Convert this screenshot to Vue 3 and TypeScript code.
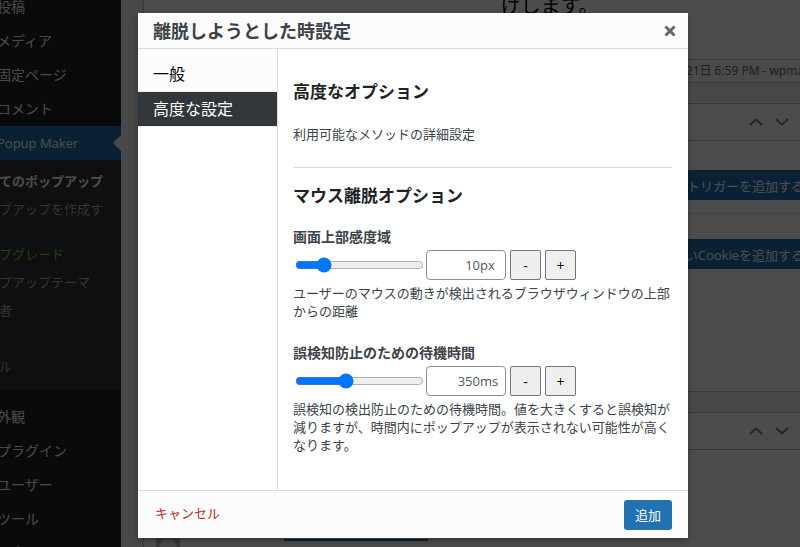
<script setup lang="ts">
import { ref } from 'vue'

interface Slider {
  id: string
  label: string
  help: string
  unit: string
  min: number
  max: number
  step: number
  value: number
}

const sliders = ref<Slider[]>([
  {
    id: 'top-sensitivity',
    label: '画面上部感度域',
    help: 'ユーザーのマウスの動きが検出されるブラウザウィンドウの上部からの距離',
    unit: 'px',
    min: 1,
    max: 50,
    step: 1,
    value: 10,
  },
  {
    id: 'delay-sensitivity',
    label: '誤検知防止のための待機時間',
    help: '誤検知の検出防止のための待機時間。値を大きくすると誤検知が減りますが、時間内にポップアップが表示されない可能性が高くなります。',
    unit: 'ms',
    min: 100,
    max: 750,
    step: 50,
    value: 350,
  },
])

const tabs = ['一般', '高度な設定']
const activeTab = ref('高度な設定')

const menuTop = ['投稿', 'メディア', '固定ページ', 'コメント']
const menuBottom = ['外観', 'プラグイン', 'ユーザー', 'ツール', '設定']

function nudge(s: Slider, direction: number) {
  s.value = Math.min(s.max, Math.max(s.min, s.value + direction * s.step))
}
</script>

<template>
  <div class="screen">
    <nav class="menu">
      <a v-for="m in menuTop" :key="m" href="#" class="item">{{ m }}</a>
      <a href="#" class="item current">Popup Maker</a>
      <div class="submenu">
        <a href="#" class="active">てのポップアップ</a>
        <a href="#" class="two-line">プアップを作成す</a>
        <a href="#" class="upgrade">プグレード</a>
        <a href="#">プアップテーマ</a>
        <a href="#" class="spaced">者</a>
        <a href="#">ル</a>
      </div>
      <a v-for="m in menuBottom" :key="m" href="#" class="item">{{ m }}</a>
    </nav>

    <main class="page">
      <section class="editor">
        <p class="editor-text">けします。</p>
        <p class="status">21日 6:59 PM - wpma</p>
      </section>
      <section class="box">
        <header class="box-head">
          <svg viewBox="0 0 14 8"><path d="M1 7 7 1.500 13 7" /></svg>
          <svg viewBox="0 0 14 8"><path d="M1 1 7 6.500 13 1" /></svg>
        </header>
        <div class="box-row"><button type="button" class="wide">トリガーを追加する</button></div>
        <div class="box-row last"><button type="button" class="wide">いCookieを追加する</button></div>
      </section>
      <section class="box tail">
        <header class="box-head">
          <svg viewBox="0 0 14 8"><path d="M1 7 7 1.500 13 7" /></svg>
          <svg viewBox="0 0 14 8"><path d="M1 1 7 6.500 13 1" /></svg>
        </header>
        <div class="author">
          <svg class="avatar" viewBox="0 0 24 24">
            <rect width="24" height="24" fill="#c0c0c0" />
            <circle cx="12" cy="10" r="9" fill="#f0f0f0" />
          </svg>
          <span class="field"></span>
        </div>
      </section>
    </main>

    <div class="overlay">
      <form class="modal" role="dialog" aria-labelledby="modal-title" @submit.prevent>
        <header class="modal-head">
          <h2 id="modal-title">離脱しようとした時設定</h2>
          <button type="button" class="close" aria-label="閉じる">
            <svg viewBox="0 0 12 12"><path d="M1.500 1.500 10.500 10.500M10.500 1.500 1.500 10.500" /></svg>
          </button>
        </header>

        <div class="modal-body">
          <div class="tabs">
            <button
              v-for="t in tabs"
              :key="t"
              type="button"
              :class="{ on: t === activeTab }"
              @click="activeTab = t"
            >{{ t }}</button>
          </div>

          <div class="content">
            <div class="intro">
              <h3>高度なオプション</h3>
              <p>利用可能なメソッドの詳細設定</p>
            </div>
            <h3>マウス離脱オプション</h3>
            <div v-for="s in sliders" :key="s.id" class="setting">
              <label :for="s.id">{{ s.label }}</label>
              <div class="controls">
                <input
                  v-model.number="s.value"
                  type="range"
                  :min="s.min"
                  :max="s.max"
                  :aria-label="s.label"
                />
                <span class="number">
                  <input :id="s.id" v-model.number="s.value" type="number" :min="s.min" :max="s.max" />
                  <span class="unit">{{ s.unit }}</span>
                </span>
                <button type="button" @click="nudge(s, -1)">-</button>
                <button type="button" @click="nudge(s, 1)">+</button>
              </div>
              <p>{{ s.help }}</p>
            </div>
          </div>
        </div>

        <footer class="modal-foot">
          <a href="#" class="cancel">キャンセル</a>
          <button type="submit" class="submit">追加</button>
        </footer>
      </form>
    </div>
  </div>
</template>

<style>
body {
  margin: 0;
  overflow: hidden;
  background: #f0f0f1;
}
</style>

<style scoped>
.screen {
  position: relative;
  display: flex;
  height: 100vh;
  overflow: hidden;
  font-family: 'Open Sans', 'Noto Sans CJK JP', sans-serif;
  font-size: 13px;
  line-height: 18px;
  color: #3c434a;
}
.screen * {
  box-sizing: border-box;
}
h2,
h3,
p {
  margin: 0;
}
a {
  text-decoration: none;
}
button,
input {
  margin: 0;
  font-family: inherit;
}

/* Admin menu */
.menu {
  flex: none;
  width: 124px;
  margin: -10px 0 0 -3px;
  background: #1d2327;
  white-space: nowrap;
}
.item {
  display: block;
  height: 34px;
  font-size: 14px;
  line-height: 34px;
  color: #f0f0f1;
}
.item.current {
  position: relative;
  background: #2271b1;
  color: #fff;
  font-size: 13px;
}
.item.current::after {
  content: '';
  position: absolute;
  top: 9px;
  right: 0;
  border: 8px solid transparent;
  border-left: 0;
  border-right-color: #f0f0f1;
}
.submenu {
  display: flex;
  flex-direction: column;
  margin-bottom: 11px;
  padding: 7px 0 9px 2px;
  background: #2c3338;
}
.submenu a {
  padding: 5px 0;
  color: #a7aaad;
}
.submenu .active {
  font-weight: 600;
  color: #fff;
}
.submenu .two-line {
  padding-bottom: 22px;
}
.submenu .upgrade {
  color: #8fbf30;
}
.submenu .spaced {
  padding-bottom: 33px;
}

/* Page behind the dialog */
.page {
  flex: 1;
  min-width: 0;
  display: flex;
  flex-direction: column;
  gap: 20px;
  margin-right: -5px;
  padding-left: 22px;
}
.editor,
.box {
  border: 1px solid #c3c4c7;
  background: #fff;
}
.editor {
  border-top: 0;
}
.editor-text {
  height: 59px;
  padding-left: 54%;
  font-size: 20px;
  line-height: 12px;
  color: #000;
}
.status {
  border-top: 1px solid #c3c4c7;
  background: #f6f7f7;
  font-size: 12px;
  line-height: 22px;
  text-align: right;
  color: #646970;
}
.box-head {
  display: flex;
  align-items: center;
  justify-content: flex-end;
  gap: 12px;
  height: 37px;
  padding-right: 15px;
  border-bottom: 1px solid #c3c4c7;
}
.box-head svg {
  width: 14px;
  height: 8px;
  fill: none;
  stroke: #787c82;
  stroke-width: 2;
}
.box-row {
  display: flex;
  justify-content: flex-end;
  padding: 29px 0 13px;
  border-bottom: 1px solid #e4e4e4;
}
.box-row.last {
  padding: 25px 0 122px;
  border-bottom: 0;
}
.wide {
  width: 180px;
  height: 30px;
  padding: 0;
  border: 0;
  background: #2271b1;
  color: #fff;
  font-size: 13px;
  text-align: right;
}
.tail {
  flex: 1;
}
.author {
  display: flex;
  align-items: flex-end;
  gap: 104px;
  padding: 88px 0 0 12px;
}
.avatar {
  width: 24px;
  height: 24px;
}
.field {
  width: 144px;
  height: 2px;
  margin-bottom: 21px;
  background: #2271b1;
}

/* Dialog */
.overlay {
  position: absolute;
  inset: 0;
  display: flex;
  padding: 13px 112px 9px 138px;
  background: rgba(0, 0, 0, 0.7);
}
.modal {
  flex: 1;
  min-width: 0;
  display: flex;
  flex-direction: column;
  background: #fff;
  box-shadow: 0 3px 6px rgba(0, 0, 0, 0.3);
}
.modal-head {
  display: flex;
  align-items: center;
  justify-content: space-between;
  height: 36px;
  padding: 0 12px 0 15px;
  border-bottom: 1px solid #ddd;
  background: #fcfcfc;
}
.modal-head h2 {
  font-size: 18px;
  font-weight: 600;
  line-height: 24px;
}
.close {
  display: flex;
  padding: 0;
  border: 0;
  background: none;
}
.close svg {
  width: 12px;
  height: 12px;
  fill: none;
  stroke: #666;
  stroke-width: 3;
}
.modal-body {
  flex: 1;
  display: flex;
}
.tabs {
  flex: none;
  width: 140px;
  padding-top: 8px;
  border-right: 1px solid #ddd;
}
.tabs button {
  display: block;
  width: 100%;
  height: 35px;
  padding: 0 15px;
  border: 0;
  border-bottom: 1px solid #eee;
  background: #fcfcfc;
  color: #000;
  font-size: 16px;
  line-height: 34px;
  text-align: left;
}
.tabs .on {
  background: #32373c;
  color: #fff;
}
.content {
  flex: 1;
  min-width: 0;
  padding: 31px 16px 16px 15px;
}
.content h3 {
  font-size: 17px;
  font-weight: 600;
  line-height: 24px;
  color: #1d2327;
}
.intro {
  margin-bottom: 16px;
  padding-bottom: 24px;
  border-bottom: 1px solid #ddd;
}
.intro p {
  margin-top: 21px;
}
.setting {
  margin-top: 19px;
}
.setting + .setting {
  margin-top: 23px;
}
.setting label {
  display: block;
  font-size: 14px;
  font-weight: 600;
  line-height: 20px;
}
.controls {
  display: flex;
  align-items: center;
  gap: 4px;
  margin: 3px 0 4px;
}
.controls input[type='range'] {
  width: 129px;
  margin: 0 -2px 0 2px;
}
.number {
  position: relative;
  display: flex;
}
.number input {
  width: 80px;
  height: 30px;
  padding: 0 25px 0 8px;
  border: 1px solid #8c8f94;
  border-radius: 4px;
  background: #fff;
  color: #50575e;
  font-size: 13px;
  text-align: right;
  appearance: textfield;
}
.number input::-webkit-inner-spin-button {
  appearance: none;
  margin: 0;
}
.unit {
  position: absolute;
  top: 6px;
  left: 54px;
  color: #50575e;
}
.controls button {
  width: 31px;
  height: 30px;
  padding: 0;
  border: 1px solid #767676;
  border-radius: 2px;
  background: #efefef;
  color: #000;
  font-size: 14px;
}
.modal-foot {
  display: flex;
  align-items: center;
  justify-content: space-between;
  height: 48px;
  padding: 0 16px 0 17px;
  border-top: 1px solid #ddd;
  background: #fcfcfc;
}
.cancel {
  padding-bottom: 4px;
  color: #b32d2e;
}
.submit {
  width: 48px;
  height: 30px;
  padding: 0;
  border: 0;
  border-radius: 3px;
  background: #2271b1;
  color: #fff;
  font-size: 13px;
}
</style>
